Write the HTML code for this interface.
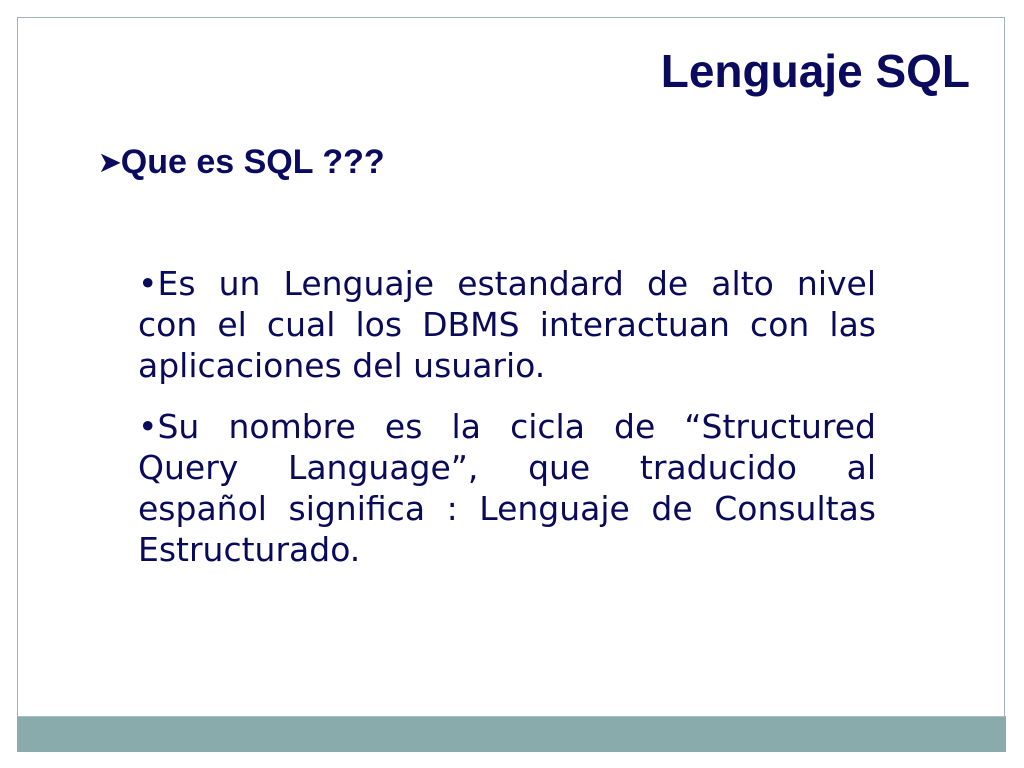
<!DOCTYPE html>
<html><head><meta charset="utf-8"><style>
html,body{margin:0;padding:0;background:#fff;width:1024px;height:768px;overflow:hidden;position:relative}
.frame{position:absolute;left:17px;top:17px;width:988px;height:733px;border:1px solid #9fb3b5;box-sizing:border-box}
.bar{position:absolute;left:17px;top:716px;width:989px;height:35px;background:#8aabab;border-top:1px solid #a8bdbd}
.title{position:absolute;right:54px;top:44px;font:bold 46px "Liberation Sans",sans-serif;color:#0a0a5e}
.sub{position:absolute;left:99px;top:143px;font:bold 34px "Liberation Sans",sans-serif;color:#0a0a5e;white-space:nowrap}
.sub span{font-size:26px;vertical-align:2px}
.body{position:absolute;left:138px;top:263px;width:738px;font:33px "DejaVu Sans","Liberation Sans",sans-serif;line-height:41px;color:#0a0a5a}
.body div{text-align:justify;text-align-last:justify;white-space:nowrap}
.body div.l{text-align-last:left}
.gap{height:20px}
</style></head><body>
<div class="frame"></div>
<div class="bar"></div>
<div class="title">Lenguaje SQL</div>
<div class="sub"><span>&#10148;</span>Que es SQL ???</div>
<div class="body">
<div>•Es un Lenguaje estandard de alto nivel</div>
<div>con el cual los DBMS interactuan con las</div>
<div class="l">aplicaciones del usuario.</div>
<div class="gap"></div>
<div>•Su nombre es la cicla de “Structured</div>
<div>Query Language”, que traducido al</div>
<div>español significa : Lenguaje de Consultas</div>
<div class="l">Estructurado.</div>
</div>
</body></html>
